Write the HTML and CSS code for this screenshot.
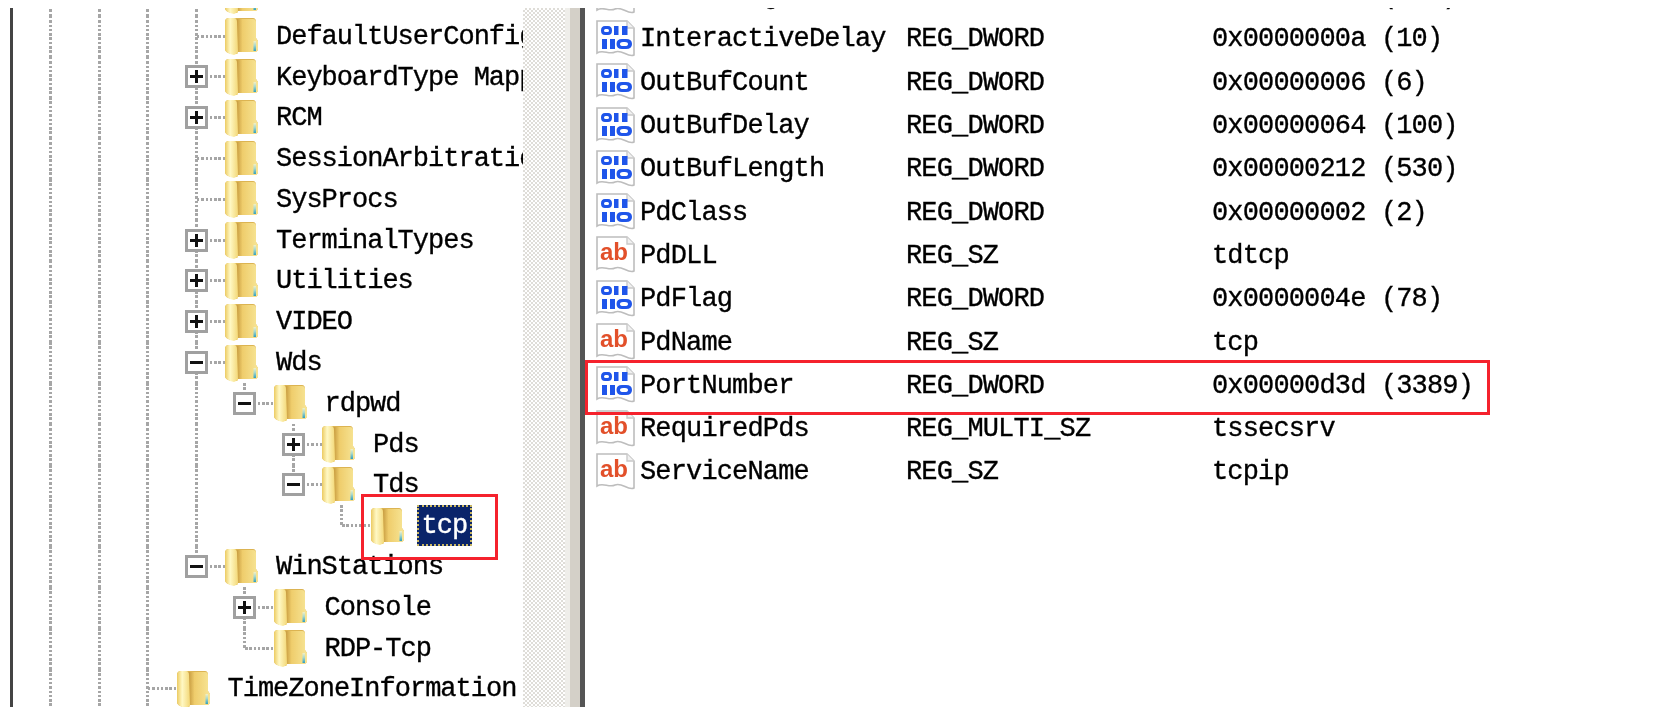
FILE: index.html
```html
<!DOCTYPE html>
<html lang="en">
<head>
<meta charset="utf-8">
<title>Registry Editor</title>
<link rel="stylesheet" href="styles.css">
</head>
<body>
<svg class="defs" width="0" height="0" aria-hidden="true">
  <defs>
    <linearGradient id="leafA" x1="0" x2="1" y1="0" y2="0">
      <stop offset="0" stop-color="#eccb62"/><stop offset=".4" stop-color="#fff8c4"/><stop offset="1" stop-color="#f3d878"/>
    </linearGradient>
    <linearGradient id="leafB" x1="0" x2="1" y1="0" y2="0">
      <stop offset="0" stop-color="#c2953a"/><stop offset=".3" stop-color="#efcd6c"/><stop offset="1" stop-color="#f7e596"/>
    </linearGradient>
    <linearGradient id="tick" x1="0" x2="0" y1="0" y2="1">
      <stop offset="0" stop-color="#f4f0c4"/><stop offset=".45" stop-color="#a8d8cc"/><stop offset="1" stop-color="#2f9fc0"/>
    </linearGradient>
    <symbol id="folder" viewBox="0 0 33 38">
      <path d="M9 1H28Q31 1 31 5V21L33 24V32Q33 35 29 35H10L13 37H7Q0 36 0 32V5Q0 1 4 1Z" fill="#dcb452"/>
      <path d="M11 2H28Q31 2 31 5V21L33 24V32Q33 35 29 35H13Z" fill="url(#leafB)"/>
      <path d="M0 5Q0 1 4 1H9Q12 1 12 5L13 36L9 38Q0 36 0 32Z" fill="url(#leafA)"/>
      <rect x="28.500" y="24" width="2.500" height="10" fill="url(#tick)"/>
    </symbol>
    <symbol id="doc" viewBox="0 0 41 40">
      <path d="M2 3H32L39 10V37C33 40 27 31 20 34C14 37 8 31 2 35Z" fill="#fff" stroke="#bdbdbd" stroke-width="1.600"/>
      <path d="M32 3V10H39" fill="#f0f0f0" stroke="#c9c9c9" stroke-width="1.400"/>
    </symbol>
    <symbol id="dword" viewBox="0 0 41 40">
      <use href="#doc" width="41" height="40"/>
      <g fill="#1f55ea">
        <path fill-rule="evenodd" d="M10 8h3q4 0 4 4.500t-4 4.500h-3q-4 0-4-4.500t4-4.500zM10.500 11q-1.500 0-1.500 1.500t1.500 1.500h2q1.500 0 1.500-1.500t-1.500-1.500z"/>
        <rect x="19" y="8" width="4.500" height="9"/><rect x="27" y="8" width="5.500" height="9"/>
        <rect x="7" y="21" width="5" height="10"/><rect x="15" y="21" width="5" height="10"/>
        <path fill-rule="evenodd" d="M27 21h4q6 0 6 5t-6 5h-4q-5.500 0-5.500-5t5.500-5zM28 24q-3 0-3 2t3 2h2q3 0 3-2t-3-2z"/>
      </g>
    </symbol>
    <symbol id="sz" viewBox="0 0 41 40">
      <use href="#doc" width="41" height="40"/>
      <text class="abtext" x="5" y="26">ab</text>
    </symbol>
  </defs>
</svg>

<div class="app">
  <div class="panes">
    <div class="tree">
      <ul class="tree-list">
        <li class="node"><i class="g"></i><i class="g"></i><i class="g"></i><span class="ex tee"></span><svg class="folder"><use href="#folder"/></svg><span class="label">ConnectionHandler</span></li>
        <li class="node"><i class="g"></i><i class="g"></i><i class="g"></i><span class="ex tee"></span><svg class="folder"><use href="#folder"/></svg><span class="label">DefaultUserConfiguration</span></li>
        <li class="node"><i class="g"></i><i class="g"></i><i class="g"></i><span class="ex tee"><b class="box plus"></b></span><svg class="folder"><use href="#folder"/></svg><span class="label">KeyboardType Mapping</span></li>
        <li class="node"><i class="g"></i><i class="g"></i><i class="g"></i><span class="ex tee"><b class="box plus"></b></span><svg class="folder"><use href="#folder"/></svg><span class="label">RCM</span></li>
        <li class="node"><i class="g"></i><i class="g"></i><i class="g"></i><span class="ex tee"></span><svg class="folder"><use href="#folder"/></svg><span class="label">SessionArbitrationHelper</span></li>
        <li class="node"><i class="g"></i><i class="g"></i><i class="g"></i><span class="ex tee"></span><svg class="folder"><use href="#folder"/></svg><span class="label">SysProcs</span></li>
        <li class="node"><i class="g"></i><i class="g"></i><i class="g"></i><span class="ex tee"><b class="box plus"></b></span><svg class="folder"><use href="#folder"/></svg><span class="label">TerminalTypes</span></li>
        <li class="node"><i class="g"></i><i class="g"></i><i class="g"></i><span class="ex tee"><b class="box plus"></b></span><svg class="folder"><use href="#folder"/></svg><span class="label">Utilities</span></li>
        <li class="node"><i class="g"></i><i class="g"></i><i class="g"></i><span class="ex tee"><b class="box plus"></b></span><svg class="folder"><use href="#folder"/></svg><span class="label">VIDEO</span></li>
        <li class="node"><i class="g"></i><i class="g"></i><i class="g"></i><span class="ex tee"><b class="box"></b></span><svg class="folder"><use href="#folder"/></svg><span class="label">Wds</span></li>
        <li class="node"><i class="g"></i><i class="g"></i><i class="g"></i><i class="g"></i><span class="ex corner"><b class="box"></b></span><svg class="folder"><use href="#folder"/></svg><span class="label">rdpwd</span></li>
        <li class="node"><i class="g"></i><i class="g"></i><i class="g"></i><i class="g"></i><i class="g off"></i><span class="ex tee"><b class="box plus"></b></span><svg class="folder"><use href="#folder"/></svg><span class="label">Pds</span></li>
        <li class="node"><i class="g"></i><i class="g"></i><i class="g"></i><i class="g"></i><i class="g off"></i><span class="ex corner"><b class="box"></b></span><svg class="folder"><use href="#folder"/></svg><span class="label">Tds</span></li>
        <li class="node"><i class="g"></i><i class="g"></i><i class="g"></i><i class="g"></i><i class="g off"></i><i class="g off"></i><span class="ex corner"></span><svg class="folder"><use href="#folder"/></svg><span class="label selected">tcp</span></li>
        <li class="node"><i class="g"></i><i class="g"></i><i class="g"></i><span class="ex corner"><b class="box"></b></span><svg class="folder"><use href="#folder"/></svg><span class="label">WinStations</span></li>
        <li class="node"><i class="g"></i><i class="g"></i><i class="g"></i><i class="g off"></i><span class="ex tee"><b class="box plus"></b></span><svg class="folder"><use href="#folder"/></svg><span class="label">Console</span></li>
        <li class="node"><i class="g"></i><i class="g"></i><i class="g"></i><i class="g off"></i><span class="ex corner"></span><svg class="folder"><use href="#folder"/></svg><span class="label">RDP-Tcp</span></li>
        <li class="node"><i class="g"></i><i class="g"></i><span class="ex tee"></span><svg class="folder"><use href="#folder"/></svg><span class="label">TimeZoneInformation</span></li>
      </ul>
    </div>
    <div class="splitter"><div class="hatch"></div><div class="gap"></div><div class="bar"></div><div class="edge"></div></div>
    <div class="values">
      <div class="value-list">
        <div class="vrow"><svg class="ico"><use href="#dword"/></svg><span>InBufLength</span><span>REG_DWORD</span><span>0x00000212 (530)</span></div>
        <div class="vrow"><svg class="ico"><use href="#dword"/></svg><span>InteractiveDelay</span><span>REG_DWORD</span><span>0x0000000a (10)</span></div>
        <div class="vrow"><svg class="ico"><use href="#dword"/></svg><span>OutBufCount</span><span>REG_DWORD</span><span>0x00000006 (6)</span></div>
        <div class="vrow"><svg class="ico"><use href="#dword"/></svg><span>OutBufDelay</span><span>REG_DWORD</span><span>0x00000064 (100)</span></div>
        <div class="vrow"><svg class="ico"><use href="#dword"/></svg><span>OutBufLength</span><span>REG_DWORD</span><span>0x00000212 (530)</span></div>
        <div class="vrow"><svg class="ico"><use href="#dword"/></svg><span>PdClass</span><span>REG_DWORD</span><span>0x00000002 (2)</span></div>
        <div class="vrow"><svg class="ico"><use href="#sz"/></svg><span>PdDLL</span><span>REG_SZ</span><span>tdtcp</span></div>
        <div class="vrow"><svg class="ico"><use href="#dword"/></svg><span>PdFlag</span><span>REG_DWORD</span><span>0x0000004e (78)</span></div>
        <div class="vrow"><svg class="ico"><use href="#sz"/></svg><span>PdName</span><span>REG_SZ</span><span>tcp</span></div>
        <div class="vrow"><svg class="ico"><use href="#dword"/></svg><span>PortNumber</span><span>REG_DWORD</span><span>0x00000d3d (3389)</span></div>
        <div class="vrow"><svg class="ico"><use href="#sz"/></svg><span>RequiredPds</span><span>REG_MULTI_SZ</span><span>tssecsrv</span></div>
        <div class="vrow"><svg class="ico"><use href="#sz"/></svg><span>ServiceName</span><span>REG_SZ</span><span>tcpip</span></div>
      </div>
    </div>
  </div>
  <div class="mark mark-tcp"></div>
  <div class="mark mark-port"></div>
</div>
</body>
</html>
```

FILE: styles.css
```css
* { box-sizing: border-box; }
html, body { margin: 0; padding: 0; background: #fff; overflow: hidden; }
.defs { position: absolute; }
.abtext { font: 700 24px "Liberation Sans", sans-serif; fill: #e2502a; letter-spacing: 0; }

.app {
  position: relative;
  width: 1677px;
  height: 707px;
  padding-top: 8px;
  background: #fff;
  filter: blur(0.65px);
  font-family: "Liberation Mono", monospace;
  font-size: 27px;
  letter-spacing: -0.85px;
  color: #000;
  -webkit-text-stroke: 0.35px #000;
}
.panes { display: flex; height: 699px; margin-left: 10px; }

.tree {
  width: 513px;
  height: 100%;
  overflow: hidden;
  border-left: 3px solid #444;
  padding-left: 13px;
  flex: none;
  letter-spacing: -1px;
}
.tree-list { list-style: none; margin: -33px 0 0; padding: 0; width: 700px; }
.node { display: flex; align-items: center; height: 40.8px; white-space: nowrap; }

.g, .ex { position: relative; display: block; flex: none; width: 48.5px; height: 100%; }
.g::before, .ex::before {
  content: "";
  position: absolute;
  left: 23px;
  top: 0;
  bottom: 0;
  width: 3px;
  background: repeating-linear-gradient(#a6a6a6 0 2.5px, transparent 2.5px 4.3px);
}
.g.off::before { display: none; }
.ex.corner::before { bottom: 50%; }
.ex::after {
  content: "";
  position: absolute;
  left: 25px;
  right: -5px;
  top: calc(50% - 1.5px);
  height: 3px;
  background: repeating-linear-gradient(90deg, #a6a6a6 0 2.5px, transparent 2.5px 4.3px);
}
.box {
  position: absolute;
  z-index: 1;
  left: 13px;
  top: calc(50% - 11.5px);
  width: 23px;
  height: 23px;
  background: #fff;
  border: 3px solid #a0a0a0;
}
.box::before {
  content: "";
  position: absolute;
  left: 2px;
  right: 2px;
  top: 7px;
  height: 3px;
  background: #111;
}
.box.plus::after {
  content: "";
  position: absolute;
  top: 2px;
  bottom: 2px;
  left: 7px;
  width: 3px;
  background: #111;
}
.folder { flex: none; width: 33px; height: 38px; margin-left: 5px; }
.label { margin-left: 12px; padding: 0 6px; height: 41px; line-height: 43px; }
.label.selected {
  margin-left: 13px;
  padding: 0 5px;
  background: #0a246a;
  color: #fff;
  -webkit-text-stroke: 0.35px #fff;
  outline: 2px dotted #c8b662;
  outline-offset: -2px;
}

.splitter { display: flex; flex: none; height: 100%; }
.hatch {
  width: 42px;
  background-color: #fff;
  background-image: repeating-conic-gradient(#dfddd8 0 25%, #fff 0 50%);
  background-size: 4px 4px;
}
.gap { width: 5px; background: #efeeea; }
.bar { width: 10px; background: #d4d0c8; }
.edge { width: 5px; background: #555; }

.values { flex: 1; min-width: 0; height: 100%; overflow: hidden; }
.value-list { margin-top: -35px; }
.vrow {
  display: grid;
  grid-template-columns: 55px 266px 306px 1fr;
  align-items: center;
  height: 43.3px;
  white-space: pre;
}
.vrow span { padding-top: 3px; }
.ico { width: 41px; height: 40px; margin-left: 10px; }

.mark { position: absolute; border: 3px solid #f5222d; }
.mark-tcp { left: 361px; top: 494px; width: 137px; height: 66px; }
.mark-port { left: 585px; top: 360px; width: 905px; height: 55px; }
```
